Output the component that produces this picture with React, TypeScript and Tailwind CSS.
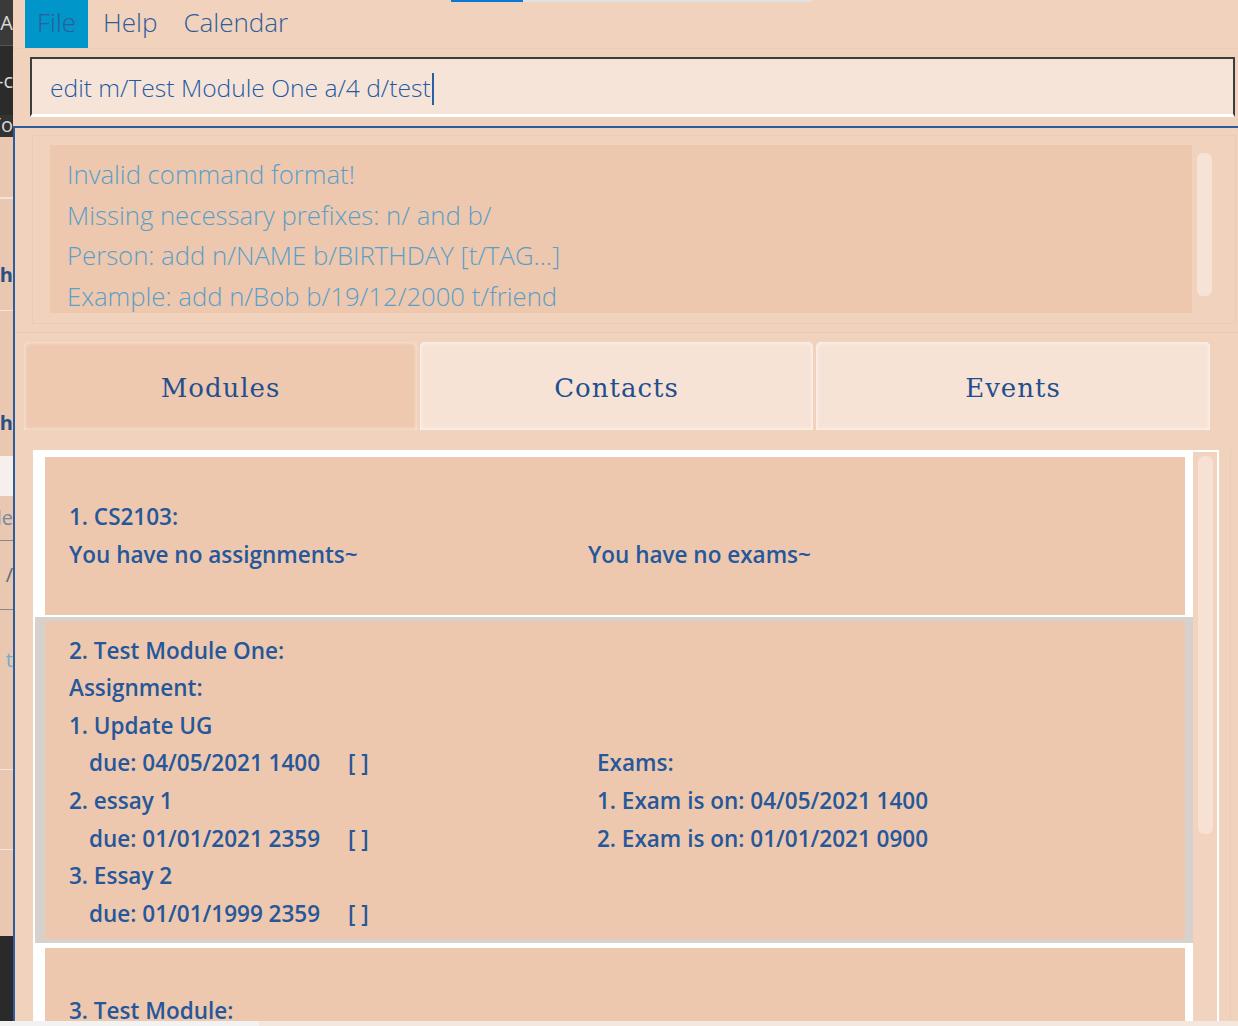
import React from "react";

const SANS = "font-['Open_Sans','Noto_Sans',sans-serif]";

function Due({ text }: { text: string }) {
  return (
    <div className="flex pl-[20px]">
      <span>{text}</span>
      <span className="ml-[28px]">[ ]</span>
    </div>
  );
}

export default function App() {
  return (
    <div className={`relative flex h-[1026px] w-[1238px] overflow-hidden bg-[#f1d2bd] ${SANS}`}>
      {/* window behind, left strip */}
      <div className="flex w-[13px] shrink-0 flex-col overflow-hidden text-[20px] leading-none">
        <div className="flex h-[45px] items-center justify-end bg-[#3a3a3a] text-[#d8d8d8]">
          <span className="whitespace-nowrap">CA</span>
        </div>
        <div className="flex h-[70px] items-center justify-end border-t border-[#555] bg-[#2b2b2b] text-[#d8d8d8]">
          <span className="whitespace-nowrap">-c</span>
        </div>
        <div className="flex h-[22px] items-start justify-end bg-[#333] text-[#d8d8d8]">
          <span className="whitespace-nowrap">Yo</span>
        </div>
        <div className="flex flex-1 flex-col bg-[#e9c7b0]">
          <div className="h-[62px] border-b-2 border-[#f3e2d7]" />
          <div className="h-[41px]" />
          <div className="flex h-[70px] items-center justify-end font-bold text-[#2a4f86]">
            <span>ch</span>
          </div>
          <div className="h-[80px] border-t border-[#f3e2d7]" />
          <div className="flex h-[66px] items-center justify-end font-bold text-[#2a4f86]">
            <span>ch</span>
          </div>
          <div className="h-[40px] bg-[#f6f0ec]" />
          <div className="flex h-[44px] items-center justify-end text-[#7a8a9a]">
            <span>le</span>
          </div>
          <div className="flex h-[70px] items-center justify-end border-y border-[#8a8a8a] text-[#5a6a7a]">
            <span>/</span>
          </div>
          <div className="h-[20px]" />
          <div className="flex h-[60px] items-center justify-end text-[#6fb0c8]">
            <span>t</span>
          </div>
          <div className="h-[80px] border-b border-[#f3e2d7]" />
          <div className="h-[80px] border-b border-[#f3e2d7]" />
          <div className="flex-1" />
        </div>
        <div className="h-[90px] bg-[#2a2a2a]" />
      </div>

      {/* main window */}
      <div className="flex min-w-0 flex-1 flex-col">
        {/* menu bar */}
        <div className="flex h-[48px] items-stretch pb-[4px] pl-[12px] text-[26px] font-light text-[#2f5c9a]">
          <div className="-mb-[4px] flex items-center bg-[#0096c9] px-[12px] pb-[4px]">File</div>
          <div className="flex items-center pl-[15px] pr-[13px]">Help</div>
          <div className="flex items-center px-[13px]">Calendar</div>
        </div>

        {/* command box */}
        <div className="h-[78px] border-t border-[#edcbb4] pl-[17px] pr-[3px] pt-[8px]">
          <div className="flex h-[60px] items-center border-x-2 border-t-2 border-b-[3px] border-[#3d3d3d] border-b-white bg-[#f7e4d8] pl-[18px] pt-[4px] text-[24.6px] font-light text-[#1f5ba3]">
            <span className="whitespace-pre">edit m/Test Module One a/4 d/test</span>
            <span className="ml-[1px] h-[32px] w-[2px] bg-[#2a5ea0]" />
          </div>
        </div>

        {/* lower panel */}
        <div className="flex min-h-0 flex-1 flex-col border-l-2 border-t-2 border-[#2a5c9e]">
          {/* result display */}
          <div className="flex h-[205px] flex-col border-b border-[#ecc9b1] pl-[17px] pr-[2px] pt-[7px]">
            <div className="flex h-[189px] items-stretch border border-[#ecccb6] pb-[10px] pl-[17px] pt-[9px]">
              <div className="flex w-[1142px] flex-col bg-[#edc8ae] pl-[17px] pt-[10px] text-[25.7px] font-light leading-[40.5px] text-[#5b9fc8]">
                <div>Invalid command format!</div>
                <div>Missing necessary prefixes: n/ and b/</div>
                <div>Person: add n/NAME b/BIRTHDAY [t/TAG...]</div>
                <div>Example: add n/Bob b/19/12/2000 t/friend</div>
              </div>
              <div className="ml-[5px] mt-[8px] h-[143px] w-[15px] rounded-[6px] bg-[#f7e3d6]" />
            </div>
          </div>

          {/* tabs */}
          <div className="flex h-[117px] shrink-0 gap-[3px] pl-[9px] pt-[9px] font-['DejaVu_Serif',serif] text-[26px] tracking-[1px] text-[#1f4f8f]">
            <div className="flex h-[88px] w-[393px] items-center justify-center rounded-t-[5px] bg-[#eec9af] pt-[5px] shadow-[inset_0_0_4px_rgba(255,255,255,0.8)]">
              Modules
            </div>
            <div className="flex h-[88px] w-[393px] items-center justify-center rounded-t-[5px] bg-[#f7e3d6] pt-[5px] shadow-[inset_0_0_4px_rgba(255,255,255,0.9)]">
              Contacts
            </div>
            <div className="flex h-[88px] w-[394px] items-center justify-center rounded-t-[5px] bg-[#f7e3d6] pt-[5px] shadow-[inset_0_0_4px_rgba(255,255,255,0.9)]">
              Events
            </div>
          </div>

          {/* list */}
          <div className="flex min-h-0 flex-1 pl-[18px]">
            <div className="flex w-[1186px] border-x-2 border-t-2 border-white">
              <div className="flex w-[1158px] flex-col text-[22.5px] font-semibold leading-[37.6px] text-[#25579a]">
                <div className="bg-white pb-[2px] pl-[10px] pr-[8px] pt-[5px]">
                  <div className="flex h-[158px] flex-col justify-center bg-[#edc8ae] pl-[24px]">
                    <div>1. CS2103:</div>
                    <div className="flex items-center">
                      <div className="w-[519px]">You have no assignments~</div>
                      <div>You have no exams~</div>
                    </div>
                  </div>
                </div>
                <div className="bg-[#d7d1cd] py-[4px] pl-[10px] pr-[8px]">
                  <div className="flex h-[318px] flex-col justify-center bg-[#edc8ae] pl-[24px] pt-[4px]">
                    <div>2. Test Module One:</div>
                    <div className="flex items-center">
                      <div className="w-[528px]">
                        <div>Assignment:</div>
                        <div>1. Update UG</div>
                        <Due text="due: 04/05/2021 1400" />
                        <div>2. essay 1</div>
                        <Due text="due: 01/01/2021 2359" />
                        <div>3. Essay 2</div>
                        <Due text="due: 01/01/1999 2359" />
                      </div>
                      <div>
                        <div>Exams:</div>
                        <div>1. Exam is on: 04/05/2021 1400</div>
                        <div>2. Exam is on: 01/01/2021 0900</div>
                      </div>
                    </div>
                  </div>
                </div>
                <div className="bg-white pb-[2px] pl-[10px] pr-[8px] pt-[5px]">
                  <div className="flex h-[158px] flex-col justify-center bg-[#edc8ae] pl-[24px] pt-[6px]">
                    <div>3. Test Module:</div>
                    <div className="flex items-center">
                      <div className="w-[519px]">Assignment:</div>
                      <div>Exams:</div>
                    </div>
                  </div>
                </div>
              </div>
              {/* list scrollbar */}
              <div className="flex-1 bg-[#f1d3bf] pl-[5px] pt-[4px]">
                <div className="h-[378px] w-[15px] rounded-[6px] bg-[#f6e1d4]" />
              </div>
            </div>
            <div className="flex-1 pl-[11px]">
              <div className="h-full w-px bg-[#eccab3]" />
            </div>
          </div>
        </div>
      </div>

      {/* top progress bar artifact */}
      <div className="absolute left-[451px] top-0 flex h-[2px] w-[361px]">
        <div className="w-[72px] bg-[#0a78d4]" />
        <div className="flex-1 bg-[#e2e2e2]" />
      </div>
      {/* bottom strip (window behind) */}
      <div className="absolute bottom-0 left-0 flex h-[5px] w-full">
        <div className="w-[259px] bg-[#f2f2f2]" />
        <div className="flex-1 bg-[#f4e7de]" />
      </div>
    </div>
  );
}
